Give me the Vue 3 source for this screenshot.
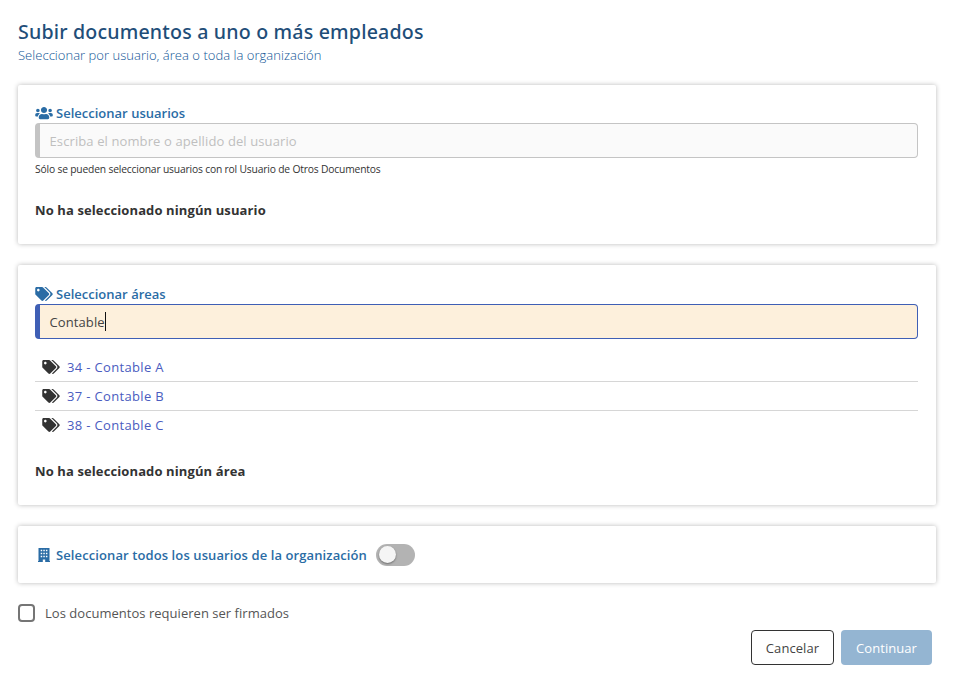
<script setup>
import { ref } from 'vue'

const areaQuery = ref('Contable')
const areas = ['34 - Contable A', '37 - Contable B', '38 - Contable C']
const tags =
  'M497.941 225.941L286.059 14.059A48 48 0 0 0 252.118 0H48C21.49 0 0 21.49 0 48v204.118a48 48 0 0 0 14.059 33.941l211.882 211.882c18.744 18.745 49.136 18.746 67.882 0l204.118-204.118c18.745-18.745 18.745-49.137 0-67.882zM112 160c-26.51 0-48-21.49-48-48s21.49-48 48-48 48 21.49 48 48-21.49 48-48 48zm513.941 133.823L421.823 497.941c-18.745 18.745-49.137 18.745-67.882 0l-.36-.36L527.64 323.522c16.999-16.999 26.36-39.6 26.36-63.64s-9.362-46.641-26.36-63.64L331.397 0h48.721a48 48 0 0 1 33.941 14.059l211.882 211.882c18.745 18.745 18.745 49.137 0 67.882z'
</script>

<template>
  <main class="page">
    <h1><span>Subir documentos a uno o más empleados</span></h1>
    <p class="subtitle"><span>Seleccionar por usuario, área o toda la organización</span></p>

    <section class="card users">
      <h2>
        <svg class="icon" viewBox="0 0 640 512"><path d="M96 224c35.3 0 64-28.7 64-64s-28.7-64-64-64-64 28.7-64 64 28.7 64 64 64zm448 0c35.3 0 64-28.7 64-64s-28.7-64-64-64-64 28.7-64 64 28.7 64 64 64zm32 32h-64c-17.6 0-33.5 7.1-45.1 18.6 40.3 22.1 68.9 62 75.1 109.4h66c17.7 0 32-14.3 32-32v-32c0-35.3-28.7-64-64-64zm-256 0c61.9 0 112-50.1 112-112S381.9 32 320 32 208 82.1 208 144s50.1 112 112 112zm76.8 32h-8.3c-20.8 10-43.9 16-68.5 16s-47.6-6-68.5-16h-8.3C179.6 288 128 339.6 128 403.2V432c0 26.5 21.5 48 48 48h288c26.5 0 48-21.5 48-48v-28.8c0-63.6-51.6-115.2-115.2-115.2zm-223.7-13.4C161.5 263.1 145.6 256 128 256H64c-35.3 0-64 28.7-64 64v32c0 17.7 14.3 32 32 32h65.9c6.3-47.4 34.9-87.3 75.2-109.4z" /></svg>
        <span>Seleccionar usuarios</span>
      </h2>
      <div class="field disabled"><span>Escriba el nombre o apellido del usuario</span></div>
      <p class="hint"><span>Sólo se pueden seleccionar usuarios con rol Usuario de Otros Documentos</span></p>
      <p class="empty"><span>No ha seleccionado ningún usuario</span></p>
    </section>

    <section class="card areas">
      <h2>
        <svg class="icon" viewBox="0 0 640 512"><path :d="tags" /></svg>
        <span>Seleccionar áreas</span>
      </h2>
      <div class="field active"><span>{{ areaQuery }}</span><i class="caret"></i></div>
      <ul>
        <li v-for="area in areas" :key="area">
          <svg class="icon" viewBox="0 0 640 512"><path :d="tags" /></svg>
          <span>{{ area }}</span>
        </li>
      </ul>
      <p class="empty"><span>No ha seleccionado ningún área</span></p>
    </section>

    <section class="card org">
      <svg class="building" viewBox="0 0 12 14">
        <path fill-rule="evenodd" d="M.5 0h11v13h.5v1H7.2v-2.6H4.8V14H0v-1h.5zM2.7 1.8v1.4h1.5V1.8zm2.6 0v1.4h1.5V1.8zm2.6 0v1.4h1.5V1.8zm-5.2 3v1.4h1.5V4.8zm2.6 0v1.4h1.5V4.8zm2.6 0v1.4h1.5V4.8zm-5.2 3v1.4h1.5V7.8zm2.6 0v1.4h1.5V7.8zm2.6 0v1.4h1.5V7.8z" />
      </svg>
      <span class="t-org">Seleccionar todos los usuarios de la organización</span>
      <div class="switch"><i></i></div>
    </section>

    <label class="sign"><i class="box"></i><span>Los documentos requieren ser firmados</span></label>

    <footer>
      <button class="cancel"><span>Cancelar</span></button>
      <button class="next"><span>Continuar</span></button>
    </footer>
  </main>
</template>

<style>
body {
  background: #fff;
}
</style>

<style scoped>
* {
  box-sizing: border-box;
  margin: 0;
  padding: 0;
}
.page {
  width: 954px;
  height: 679px;
  padding: 19px 17px 0 18px;
  font-family: 'Open Sans', 'Noto Sans', sans-serif;
  font-size: 13px;
  color: #333;
  white-space: nowrap;
  overflow: hidden;
}
h1 {
  height: 26px;
  font-family: 'Noto Sans', 'Open Sans', sans-serif;
  font-size: 19.6px;
  line-height: 26px;
  font-weight: 500;
  letter-spacing: 0.18px;
  color: #1f4e79;
}
.subtitle {
  height: 20px;
  line-height: 20px;
  font-weight: 300;
  letter-spacing: 0.03px;
  color: #0f5596;
}
.card {
  border-radius: 2px;
  background: #fff;
  box-shadow: 0 0 5px rgba(0, 0, 0, 0.28);
  width: 918px;
}
.users {
  margin-top: 20px;
  height: 159px;
  padding: 18px 18px 0 17px;
}
.areas {
  margin-top: 21px;
  height: 240px;
  padding: 19px 18px 0 17px;
}
h2 {
  display: flex;
  align-items: center;
  gap: 3px;
  height: 20px;
  font-size: 13px;
  line-height: 20px;
  font-weight: 600;
  letter-spacing: 0.01px;
  color: #2a6ca5;
}
.icon {
  width: 18px;
  height: 14px;
  fill: currentColor;
  flex: none;
}
.field {
  display: flex;
  align-items: center;
  height: 35px;
  border: 1px solid #c4c4c4;
  border-left-width: 5px;
  border-radius: 4px;
  padding-left: 9.5px;
}
.disabled {
  background: #fafafa;
  color: #bfbfbf;
  letter-spacing: 0.11px;
}
.active {
  background: #fdf0dc;
  border-color: #3f5fb5;
  color: #444;
  letter-spacing: 0.1px;
}
.caret {
  width: 1px;
  height: 19px;
  background: #111;
}
.hint {
  height: 22px;
  font-size: 10.3px;
  line-height: 22px;
  letter-spacing: -0.18px;
}
.empty {
  font-weight: 700;
  line-height: 20px;
  letter-spacing: 0.11px;
}
.users .empty {
  margin-top: 20px;
}
ul {
  list-style: none;
  margin-top: 14px;
}
li {
  display: flex;
  align-items: center;
  gap: 7px;
  height: 29px;
  padding-left: 7px;
  border-bottom: 1px solid #d6d6d6;
}
li:last-child {
  height: 28px;
  border-bottom: 0;
}
li span {
  color: #4a5cc0;
  letter-spacing: 0.34px;
}
.areas .empty {
  margin-top: 22px;
}
.org {
  margin-top: 21px;
  height: 57px;
  display: flex;
  align-items: center;
  padding-left: 20px;
  color: #2a6ca5;
  font-weight: 600;
}
.building {
  width: 12px;
  height: 14px;
  fill: currentColor;
  margin-right: 6px;
}
.t-org {
  width: 320px;
  letter-spacing: 0.1px;
}
.switch {
  width: 39px;
  height: 22px;
  border-radius: 11px;
  background: #b3b3b3;
  padding: 2px 3px;
}
.switch i {
  display: block;
  width: 17px;
  height: 17px;
  border-radius: 50%;
  background: #f5f5f5;
  box-shadow: 0 1px 2px rgba(0, 0, 0, 0.4);
}
.sign {
  display: flex;
  align-items: center;
  height: 20px;
  margin-top: 20px;
  gap: 10px;
  color: #555;
  letter-spacing: 0.03px;
}
.box {
  width: 17px;
  height: 18px;
  border: 2px solid #757575;
  border-radius: 4px;
}
footer {
  display: flex;
  justify-content: flex-end;
  gap: 7px;
  margin-top: 7px;
  padding-right: 5px;
}
button {
  height: 35px;
  border-radius: 4px;
  font: inherit;
  letter-spacing: 0.07px;
  text-align: center;
}
.cancel {
  width: 83px;
  border: 1px solid #333;
  background: #fff;
  color: #444;
}
.next {
  width: 91px;
  border: 0;
  background: #94b5d2;
  color: #fff;
}
</style>
